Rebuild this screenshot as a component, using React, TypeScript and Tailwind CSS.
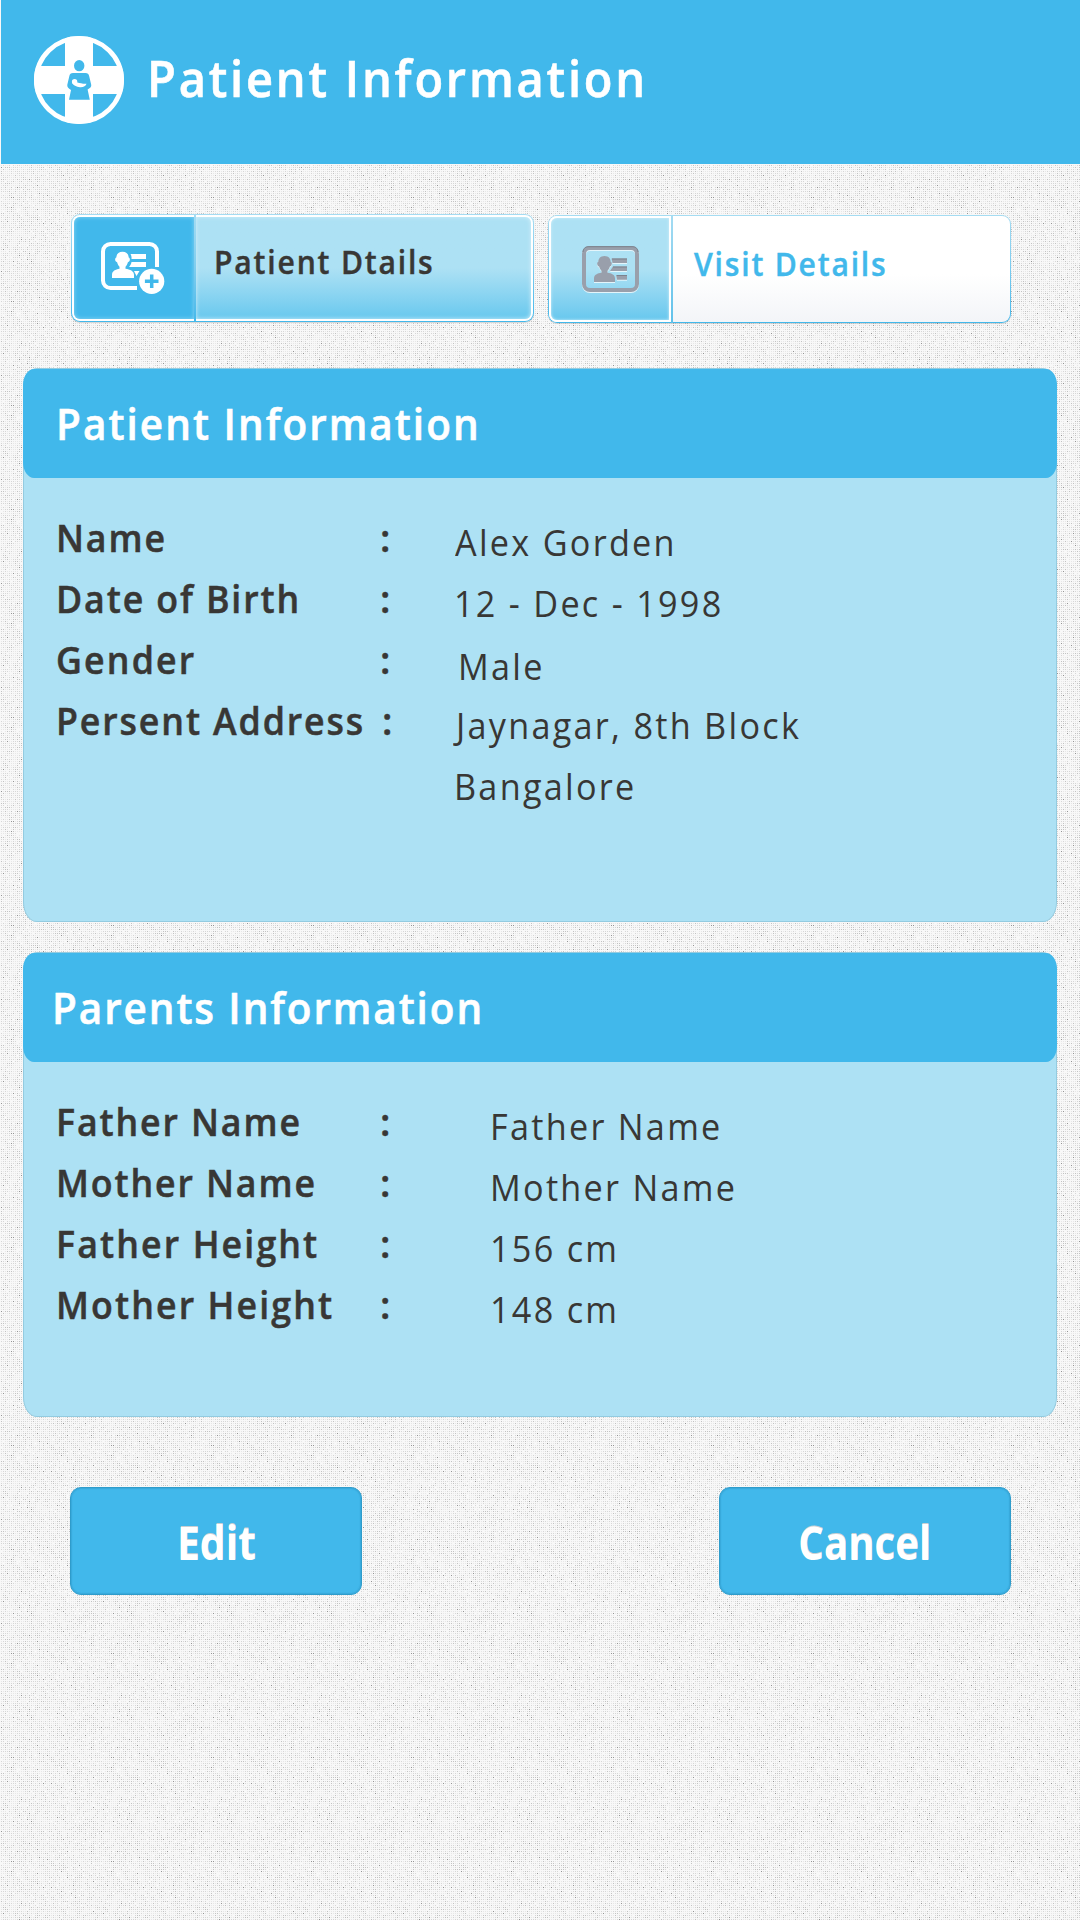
import React from "react";

type Row = { label: string; value: string; labelClass?: string; colonClass?: string; valueClass?: string };

const SHADES = [
  { color: "#e7e7e7", limit: 0.42 },
  { color: "#d6d6d6", limit: 0.78 },
  { color: "#c2c2c2", limit: 0.95 },
  { color: "#949494", limit: 0.967 },
];

/* Deterministic dot weave, 100 x 104 px per tile. */
function weavePaths() {
  const paths = SHADES.map(() => "");
  let seed = 7919;
  for (let y = 1; y < 104; y += 2) {
    for (let x = 1; x < 100; x += 2) {
      seed = (seed * 1103515245 + 12345) % 2147483648;
      const r = seed / 2147483648;
      const i = SHADES.findIndex((s) => r < s.limit);
      if (i >= 0) paths[i] += `M${x} ${y}h1v1h-1z`;
    }
  }
  return paths;
}
const WEAVE = weavePaths();

function Texture() {
  return (
    <svg className="absolute inset-0 -z-10 h-full w-full" aria-hidden="true" shapeRendering="crispEdges">
      <defs>
        <pattern id="weave" width="100" height="104" patternUnits="userSpaceOnUse">
          <rect width="100" height="104" fill="#f8f8f8" />
          {WEAVE.map((d, i) => (
            <path key={i} d={d} fill={SHADES[i].color} />
          ))}
        </pattern>
      </defs>
      <rect width="100%" height="100%" fill="url(#weave)" />
    </svg>
  );
}

function Logo() {
  return (
    <svg className="h-[90px] w-[92px] shrink-0" viewBox="33 35 92 90" aria-hidden="true">
      <defs>
        <clipPath id="disc">
          <ellipse cx="79" cy="80" rx="45" ry="44" />
        </clipPath>
      </defs>
      <ellipse cx="79" cy="80" rx="42.7" ry="41.7" fill="none" stroke="#fff" strokeWidth="4.6" />
      <g clipPath="url(#disc)" fill="#fff">
        <rect x="65" y="35" width="28" height="90" />
        <rect x="33" y="66" width="92" height="28" />
      </g>
      <g fill="#41b8eb">
        <ellipse cx="79.2" cy="65.7" rx="5.2" ry="5.6" />
        <path d="M73 73h12.4c2.3 0 3.3 1.2 3.8 3.2l2 8.6c.3 1.8-.5 3-3.6 4.7l2.2 10.2H69l2-9.7c-2.8-1.8-4-3.2-3.7-5.2l2-8.6c.5-2 1.5-3.2 3.7-3.2z" />
      </g>
      <g fill="#fff">
        <circle cx="74.6" cy="81.8" r="2.7" />
        <path d="M72.5 83c2-.6 3.5-.9 5-.6 2.5.5 5 1.5 9 1.3-.6 2.3-3.3 3.8-6.6 3.5-3.3-.2-6.9-2-7.400-4.200z" />
      </g>
    </svg>
  );
}

function CardPlusIcon() {
  return (
    <svg className="h-[56px] w-[66px]" viewBox="100 240 66 56" aria-hidden="true">
      <g fill="#fff">
        <path
          d="M137 288H110.500a7.500 7.500 0 0 1-7.500-7.500V251.500a7.500 7.500 0 0 1 7.500-7.500h39a7.500 7.500 0 0 1 7.500 7.500V267"
          fill="none"
          stroke="#fff"
          strokeWidth="4"
        />
        <path d="M122.500 251.800c4.200 0 6.200 2.800 6.200 5.800 2 1 1.200 4.200-.8 4.700-.6 2.300-1.500 3.500-2.400 4.400v2c4.500.6 8.500 2.300 8.500 6v3.300h-22v-3.300c0-3.700 3.500-5.400 7.500-6v-2c-.9-.9-1.800-2.100-2.400-4.400-2-.5-2.800-3.700-.8-4.700 0-3 2-5.800 6.200-5.800z" />
        <path d="M130.500 254H146v5h-14.500c.2-1.500 0-3.500-1-5zM131.500 262H146v5h-17c1.200-1.200 2.200-3 2.500-5zM134 271h5.500l-3 5z" />
        <circle cx="151.7" cy="281.3" r="12.6" />
      </g>
      <path d="M151.700 274.500v13.600M144.900 281.300h13.600" stroke="#41b8eb" strokeWidth="3.5" />
    </svg>
  );
}

function CardIcon() {
  return (
    <svg className="h-[52px] w-[62px]" viewBox="580 243 62 52" aria-hidden="true">
      <rect x="584" y="249" width="53" height="42" rx="6" fill="none" stroke="#e4f5fb" strokeWidth="4" />
      <rect x="584" y="248" width="53" height="42" rx="6" fill="none" stroke="#999fab" strokeWidth="4" />
      <path d="M583 252c0-3 2-5.300 5-5.300h45c3 0 5 2.300 5 5.300" fill="none" stroke="#7c828d" strokeWidth="1" />
      <g fill="#e4f5fb" transform="translate(0 1)">
        <path d="M604.500 256c4.200 0 6.200 2.800 6.200 5.800 2 1 1 4.200-.8 4.700-.6 2-1.500 3.200-2.400 4.200v2c4 .5 7.500 2 7.500 5.500v3.800h-21v-3.800c0-3.500 3.500-5 7.500-5.500v-2c-.9-1-1.800-2.200-2.400-4.200-1.800-.5-2.800-3.700-.8-4.700 0-3 2-5.800 6.200-5.800z" />
        <path d="M612 258.500h15v4.500h-14.500zM613 266.500h14v4.500h-17zM616 275h11v4.800h-10z" />
      </g>
      <g fill="#999fab">
        <path d="M604.500 256c4.200 0 6.200 2.800 6.200 5.800 2 1 1 4.200-.8 4.700-.6 2-1.500 3.200-2.400 4.200v2c4 .5 7.500 2 7.500 5.500v3.800h-21v-3.800c0-3.500 3.500-5 7.500-5.500v-2c-.9-1-1.800-2.200-2.400-4.200-1.800-.5-2.800-3.700-.8-4.700 0-3 2-5.800 6.200-5.800z" />
        <path d="M611.500 258.500H627v4.500h-14.500zM613 266.500h14v4.500h-17zM616 275h11v4.800h-10z" />
      </g>
      <path d="M612 259h15M613 267h14M617 275.500h10" stroke="#7c828d" strokeWidth="1" />
    </svg>
  );
}

function Panel({
  title,
  titleClass,
  bodyClass,
  valueColumn,
  rows,
}: {
  title: string;
  titleClass: string;
  bodyClass: string;
  valueColumn: string;
  rows: Row[];
}) {
  return (
    <section className="mx-[23px] rounded-[14px/20px] border border-[#93cbe0] bg-[#ade1f4]">
      <h2 className="-mx-px flex h-[109px] items-center rounded-[11px/16px] bg-[#41b8eb] pt-0.5 text-[43px] font-semibold text-white [-webkit-text-stroke:0.6px]">
        <span className={titleClass}>{title}</span>
      </h2>
      <dl className={bodyClass}>
        {rows.map((row) => (
          <div key={row.value} className="flex h-[61px] leading-[61px] text-[#383735]">
            <dt className="flex w-[324px] shrink-0 text-[38px] font-semibold [-webkit-text-stroke:0.5px]">
              <span className={`${row.labelClass ?? "tracking-[2px]"} origin-left scale-x-94 whitespace-nowrap`}>
                {row.label}
              </span>
            </dt>
            <dd className={valueColumn}>
              <span
                className={`${row.colonClass ?? ""} w-4 shrink-0 text-[38px] font-semibold [-webkit-text-stroke:0.5px]`}
              >
                {row.label ? ":" : ""}
              </span>
              <span
                className={`${row.valueClass ?? "mt-[5px]"} origin-left scale-x-95 text-[36px] tracking-[2.4px] whitespace-nowrap`}
              >
                {row.value}
              </span>
            </dd>
          </div>
        ))}
      </dl>
    </section>
  );
}

const PATIENT: Row[] = [
  { label: "Name", value: "Alex Gorden" },
  { label: "Date of Birth", value: "12 - Dec - 1998", valueClass: "mt-[5px] -ml-px" },
  { label: "Gender", value: "Male", labelClass: "tracking-[2.3px]", valueClass: "mt-[7px] ml-[3px]" },
  { label: "Persent Address", value: "Jaynagar, 8th Block", colonClass: "ml-0.5 -mr-0.5", valueClass: "mt-[5px] ml-px" },
  { label: "", value: "Bangalore", valueClass: "mt-[5px] -ml-px" },
];

const PARENTS: Row[] = [
  { label: "Father Name", value: "Father Name" },
  { label: "Mother Name", value: "Mother Name" },
  { label: "Father Height", value: "156 cm", labelClass: "tracking-[2.25px]" },
  { label: "Mother Height", value: "148 cm", labelClass: "tracking-[2.25px]" },
];

export default function App() {
  return (
    <main className="relative isolate flex h-[1920px] w-[1080px] flex-col overflow-hidden font-['Open_Sans',sans-serif]">
      <Texture />
      <header className="ml-px flex h-[164px] shrink-0 items-center gap-[22px] bg-[#41b8eb] pb-1 pl-8">
        <Logo />
        <h1 className="origin-left scale-x-94 pb-1 text-[50px] leading-[64px] font-semibold tracking-[2.96px] whitespace-nowrap text-white [-webkit-text-stroke:0.6px]">
          Patient Information
        </h1>
      </header>

      <nav className="mt-[50px] flex h-[109px] shrink-0 gap-[14px] pl-[71px]">
        <button className="flex h-[108px] w-[463px] rounded-[9px] bg-linear-to-b from-[#a5dcf2] to-[#41b8eb] p-px shadow-[0_1px_1px_rgba(0,0,0,0.15)]">
          <span className="flex h-full w-full rounded-lg bg-white p-0.5">
            <span className="flex h-full w-[120px] shrink-0 items-center rounded-l-md bg-[#41b8eb] pl-[26px] shadow-[inset_0_0_4px_#8fd5f2]">
              <CardPlusIcon />
            </span>
            <span className="-my-[3px] w-0.5 shrink-0 bg-linear-to-b from-[#a5dcf2] via-[#7fcdee] to-[#41b8eb]" />
            <span className="flex h-full grow items-center rounded-r-md bg-linear-to-b from-[#ade1f4] from-50% to-[#67c8ee] pl-[18px] shadow-[inset_0_0_4px_#d5f0fa]">
              <span className="origin-left scale-x-94 pb-[12px] text-[32px] font-semibold tracking-[1.93px] whitespace-nowrap text-[#383735] [-webkit-text-stroke:0.4px]">
                Patient Dtails
              </span>
            </span>
          </span>
        </button>
        <button className="mt-px flex h-[108px] w-[463px] rounded-[9px] bg-linear-to-b from-[#a5dcf2] to-[#41b8eb] p-px shadow-[0_1px_1px_rgba(0,0,0,0.15)]">
          <span className="flex h-full w-full rounded-lg bg-linear-to-b from-white from-55% to-[#f3f5f8]">
            <span className="h-full w-[122px] shrink-0 rounded-l-lg bg-white p-0.5">
              <span className="flex h-full w-full items-center rounded-l-md bg-linear-to-b from-[#ade1f4] from-50% to-[#67c8ee] pl-[29px] shadow-[inset_0_0_3px_#d5f0fa]">
                <CardIcon />
              </span>
            </span>
            <span className="-my-px w-0.5 shrink-0 bg-linear-to-b from-[#a5dcf2] to-[#5fc1ea]" />
            <span className="flex h-full grow items-center pl-[21px]">
              <span className="origin-left scale-x-94 pb-[11px] text-[32px] font-semibold tracking-[1.92px] whitespace-nowrap text-[#41b8eb] [-webkit-text-stroke:0.4px]">
                Visit Details
              </span>
            </span>
          </span>
        </button>
      </nav>

      <div className="mt-[45px] flex shrink-0 flex-col gap-[30px]">
        <Panel
          title="Patient Information"
          titleClass="ml-[33px] origin-left scale-x-94 tracking-[2.2px] whitespace-nowrap"
          bodyClass="h-[443px] pt-[29px] pl-8"
          valueColumn="flex gap-[59px]"
          rows={PATIENT}
        />
        <Panel
          title="Parents Information"
          titleClass="ml-[29px] origin-left scale-x-94 tracking-[2.06px] whitespace-nowrap"
          bodyClass="h-[354px] pt-[29px] pl-8"
          valueColumn="flex gap-[94px]"
          rows={PARENTS}
        />
      </div>

      <footer className="mt-[70px] flex shrink-0 justify-between pr-[69px] pl-[70px] text-[47px] font-bold text-white">
        <button className="flex h-[108px] w-[292px] items-center justify-center rounded-[11px] border border-[#2f9ccb] bg-[#41b8eb] pt-0.5 shadow-[inset_0_0_1px_1px_rgba(40,140,190,0.35)]">
          <span className="scale-x-[0.87] text-shadow-[0_-1px_0_#c9cfd3]">Edit</span>
        </button>
        <button className="flex h-[108px] w-[292px] items-center justify-center rounded-[11px] border border-[#2f9ccb] bg-[#41b8eb] pt-0.5 shadow-[inset_0_0_1px_1px_rgba(40,140,190,0.35)]">
          <span className="scale-x-[0.855] text-shadow-[0_-1px_0_#c9cfd3]">Cancel</span>
        </button>
      </footer>
    </main>
  );
}
